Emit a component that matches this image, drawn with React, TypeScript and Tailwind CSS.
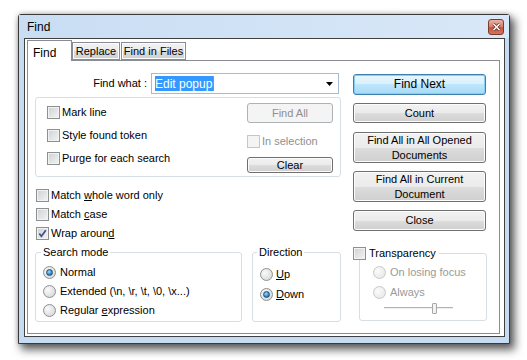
import type { ReactNode } from "react";

/* Win7 風の部品 */
function Btn({
	children,
	className = "",
	kind = "normal",
}: {
	children: ReactNode;
	className?: string;
	kind?: "normal" | "default" | "disabled";
}) {
	const skin =
		kind === "default"
			? "border-[#3c7fb1] bg-[linear-gradient(#eaf6fd,#d9f0fc_50%,#bee6fd_50%,#a7d9f5)] shadow-[inset_0_0_0_1px_#84d0f4]"
			: kind === "disabled"
				? "border-[#adb2b5] bg-[#f4f4f4] text-[#8f8f8f]"
				: "border-[#707070] bg-[linear-gradient(#f2f2f2,#ebebeb_50%,#dddddd_50%,#cfcfcf)] shadow-[inset_0_0_0_1px_#fcfcfc]";
	return (
		<div
			className={`flex items-center justify-center rounded-[3px] border text-center leading-[15px] ${skin} ${className}`}
		>
			{children}
		</div>
	);
}

function Check({ checked = false, disabled = false }: { checked?: boolean; disabled?: boolean }) {
	return (
		<span
			className={`flex h-[13px] w-[13px] shrink-0 items-center justify-center border ${
				disabled
					? "border-[#c6c6c6] bg-[#f4f4f4]"
					: "border-[#8e8f8f] bg-[linear-gradient(135deg,#cdd0d4,#f4f4f4)] shadow-[inset_0_0_0_1px_#f2f2f2]"
			}`}
		>
			{checked && (
				<svg width="9" height="9" viewBox="0 0 9 9">
					<path d="M1.3 4.6 L3.4 7.3 L7.8 1.2" fill="none" stroke="#3d548f" strokeWidth="1.7" />
				</svg>
			)}
		</span>
	);
}

function Radio({ checked = false, disabled = false }: { checked?: boolean; disabled?: boolean }) {
	return (
		<span
			className={`flex h-[13px] w-[13px] shrink-0 items-center justify-center rounded-full border ${
				disabled
					? "border-[#c9c9c9] bg-[radial-gradient(circle_at_35%_35%,#fbfbfb,#e4e4e4)]"
					: "border-[#8e8f8f] bg-[radial-gradient(circle_at_35%_35%,#fafafa,#cfd1d4)]"
			}`}
		>
			{checked && (
				<span className="h-[7px] w-[7px] rounded-full border border-[#1f4f7e] bg-[radial-gradient(circle_at_40%_35%,#9fdcfa,#1d6fb4_75%)]" />
			)}
		</span>
	);
}

function Row({ children, className = "" }: { children: ReactNode; className?: string }) {
	return <div className={`flex h-[13px] items-center gap-[2px] ${className}`}>{children}</div>;
}

export default function App() {
	return (
		<div className="h-[360px] w-[527px] bg-white pl-[18px] pt-[14px] font-['Liberation_Sans',Arial,sans-serif] text-[11px] text-black">
			{/* ウィンドウ */}
			<div className="flex h-[330px] w-[492px] flex-col rounded-t-[3px] border border-[#3a3a3a] bg-[#c4dbf2] shadow-[0_0_5px_rgba(0,0,0,0.25),4px_5px_9px_1px_rgba(0,0,0,0.6)]">
				{/* タイトルバー */}
				<div className="flex h-[23px] items-center justify-between bg-[linear-gradient(90deg,#c9ddf3,#d9e8f8)] pl-[8px] pr-[5px]">
					<span className="text-[12px]">Find</span>
					<div className="flex h-[16px] w-[16px] items-center justify-center rounded-[3px] border border-[#7e3a2c] bg-[linear-gradient(#eab0a2,#d98673_45%,#c65540_55%,#d6735d)]">
						<svg width="9" height="8" viewBox="0 0 9 8">
							<path d="M1.5 1 L7.5 7 M7.5 1 L1.5 7" stroke="#5a2a20" strokeWidth="3" />
							<path d="M1.5 1 L7.5 7 M7.5 1 L1.5 7" stroke="#ffffff" strokeWidth="1.6" />
						</svg>
					</div>
				</div>

				{/* クライアント領域 */}
				<div className="ml-[5px] mr-[4px] h-[299px] border border-[#404040] bg-white pb-[2px] pl-[2px] pr-[4px] pt-[1px]">
					{/* タブ */}
					<div className="relative z-10 -mb-[1px] flex h-[21px] items-end">
						<div className="flex h-[21px] w-[45px] items-start border-x border-t border-[#898c95] bg-white pl-[5px] pt-[3px] text-[12px]">
							Find
						</div>
						<div className="mb-[1px] flex h-[18px] w-[48px] items-center justify-center border border-[#898c95] bg-[linear-gradient(#f2f2f2,#ebebeb_50%,#dddddd_50%,#cfcfcf)] shadow-[inset_0_0_0_1px_#fcfcfc]">
							Replace
						</div>
						<div className="mb-[1px] ml-[1px] flex h-[18px] w-[65px] items-center justify-center border border-[#898c95] bg-[linear-gradient(#f2f2f2,#ebebeb_50%,#dddddd_50%,#cfcfcf)] shadow-[inset_0_0_0_1px_#fcfcfc]">
							Find in Files
						</div>
					</div>

					{/* タブパネル */}
					<div className="flex h-[274px] w-[473px] gap-[12px] border border-[#898c95] bg-white pl-[7px]">
						{/* 左列 */}
						<div className="flex w-[306px] flex-col">
							<div className="mt-[12px] flex h-[21px] items-center gap-[4px]">
								<span className="w-[112px] text-right">Find what :</span>
								<div className="flex h-[21px] w-[188px] items-center justify-between border border-[#a3bbd6] pl-[3px] pr-[5px]">
									<span className="flex h-[15px] items-center border-r border-[#e0821e] bg-[#3399ff] pr-[1px] text-[12px] text-white">
										Edit popup
									</span>
									<svg width="7" height="4" viewBox="0 0 7 4">
										<path d="M0 0 H7 L3.5 4 Z" fill="#000" />
									</svg>
								</div>
							</div>

							{/* 枠（見出しなし） */}
							<div className="mt-[3px] flex h-[80px] justify-between rounded-[3px] border border-[#d5dfe5] pl-[11px] pr-[7px] pt-[5px]">
								<div className="mt-[3px] flex flex-col gap-[10px]">
									<Row>
										<Check />
										<span>Mark line</span>
									</Row>
									<Row>
										<Check />
										<span>Style found token</span>
									</Row>
									<Row>
										<Check />
										<span>Purge for each search</span>
									</Row>
								</div>
								<div className="flex w-[86px] flex-col">
									<Btn kind="disabled" className="h-[20px]">
										Find All
									</Btn>
									<Row className="mt-[12px] text-[#8f8f8f]">
										<Check disabled />
										<span>In selection</span>
									</Row>
									<Btn className="mt-[9px] h-[16px]">Clear</Btn>
								</div>
							</div>

							<div className="ml-[1px] mt-[12px] flex flex-col gap-[6px]">
								<Row>
									<Check />
									<span>
										Match <span className="underline">w</span>hole word only
									</span>
								</Row>
								<Row>
									<Check />
									<span>
										Match <span className="underline">c</span>ase
									</span>
								</Row>
								<Row>
									<Check checked />
									<span>
										Wrap aroun<span className="underline">d</span>
									</span>
								</Row>
							</div>

							<div className="mt-[12px] flex gap-[10px]">
								<div className="relative h-[70px] w-[207px] rounded-[3px] border border-[#d5dfe5] pl-[7px] pt-[13px]">
									<span className="absolute -top-[8px] left-[5px] bg-white px-[2px] leading-[14px]">Search mode</span>
									<div className="flex flex-col gap-[6px]">
										<Row className="gap-[4px]">
											<Radio checked />
											<span>Normal</span>
										</Row>
										<Row className="gap-[4px]">
											<Radio />
											<span>Extended (\n, \r, \t, \0, \x...)</span>
										</Row>
										<Row className="gap-[4px]">
											<Radio />
											<span>
												Regular <span className="underline">e</span>xpression
											</span>
										</Row>
									</div>
								</div>
								<div className="relative h-[70px] w-[89px] rounded-[3px] border border-[#d5dfe5] pl-[7px] pt-[15px]">
									<span className="absolute -top-[8px] left-[4px] bg-white px-[2px] leading-[14px]">Direction</span>
									<div className="flex flex-col gap-[7px]">
										<Row className="gap-[3px]">
											<Radio />
											<span>
												<span className="underline">U</span>p
											</span>
										</Row>
										<Row className="gap-[3px]">
											<Radio checked />
											<span>
												<span className="underline">D</span>own
											</span>
										</Row>
									</div>
								</div>
							</div>
						</div>

						{/* 右列 */}
						<div className="flex w-[134px] flex-col">
							<Btn kind="default" className="mt-[13px] h-[21px] w-[133px] text-[12px]">
								Find Next
							</Btn>
							<Btn className="mt-[8px] h-[20px] w-[133px]">Count</Btn>
							<Btn className="mt-[9px] h-[31px] w-[133px]">
								Find All in All Opened
								<br />
								Documents
							</Btn>
							<Btn className="mt-[8px] h-[31px] w-[133px]">
								Find All in Current
								<br />
								Document
							</Btn>
							<Btn className="mt-[8px] h-[21px] w-[133px]">Close</Btn>

							<div className="relative ml-[6px] mt-[22px] h-[68px] w-[128px] rounded-[3px] border border-[#d5dfe5] pl-[13px] pt-[12px]">
								<Row className="absolute -left-[7px] -top-[7px] gap-[3px] bg-white pr-[3px]">
									<Check />
									<span>Transparency</span>
								</Row>
								<div className="flex flex-col gap-[7px] text-[#9a9a9a]">
									<Row className="gap-[4px]">
										<Radio disabled />
										<span>On losing focus</span>
									</Row>
									<Row className="gap-[4px]">
										<Radio disabled />
										<span>Always</span>
									</Row>
								</div>
								{/* スライダー */}
								<div className="ml-[11px] mt-[3px] flex h-[12px] w-[69px] items-center">
									<div className="h-[2px] w-[48px] border-y border-t-[#b4b4b4] border-b-[#eeeeee]" />
									<div className="h-[11px] w-[5px] rounded-[1px] border border-[#a8a8a8] bg-[#f2f2f2]" />
									<div className="h-[2px] flex-1 border-y border-t-[#b4b4b4] border-b-[#eeeeee]" />
								</div>
							</div>
						</div>
					</div>
				</div>
			</div>
		</div>
	);
}
